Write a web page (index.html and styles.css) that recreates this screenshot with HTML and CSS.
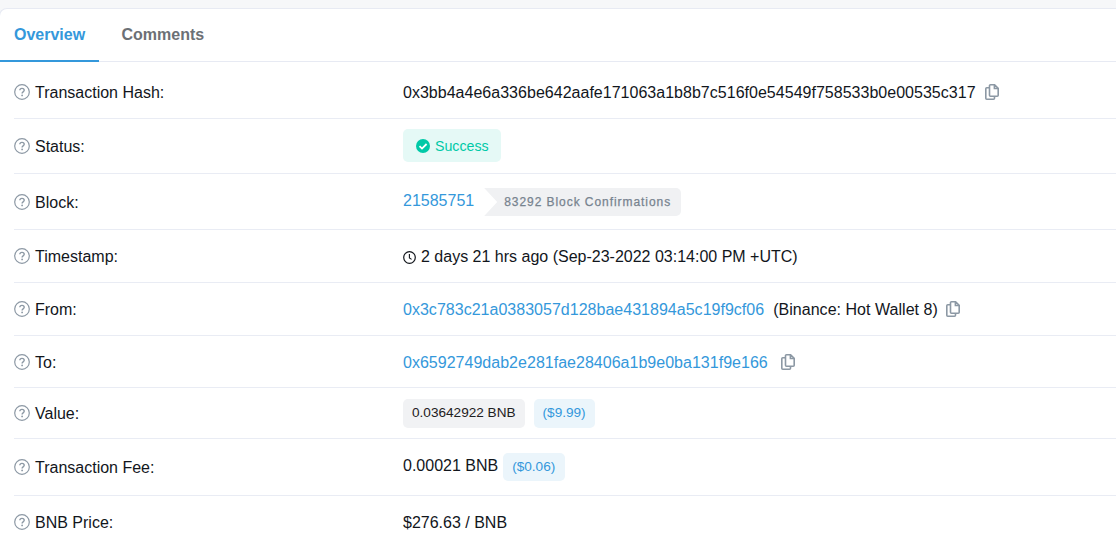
FILE: index.html
```html
<!DOCTYPE html>
<html lang="en">
<head>
    <meta charset="UTF-8">
    <title>Transaction Details</title>
    <link rel="stylesheet" href="styles.css">
</head>
<body>
    <svg class="sprite" width="0" height="0">
        <symbol id="help" viewBox="0 0 16 16">
            <circle cx="8" cy="8" r="7.3" fill="none" stroke="currentColor" stroke-width="1.2"/>
            <path d="M5.8 6.3C5.9 5.1 6.8 4.4 8 4.4c1.3 0 2.2.8 2.2 1.9 0 1.5-2.1 1.6-2.1 3.1" fill="none" stroke="currentColor" stroke-width="1.4"/>
            <circle cx="8.1" cy="11.4" r=".9" fill="currentColor"/>
        </symbol>
        <symbol id="copy" viewBox="0 0 14 16">
            <path d="M9.6.8H5.5a1 1 0 0 0-1 1v9.4a1 1 0 0 0 1 1h6.7a1 1 0 0 0 1-1V4.3zM9.4.8v3.7h3.8M4.5 3.8H1.8a1 1 0 0 0-1 1v9.4a1 1 0 0 0 1 1h6.7a1 1 0 0 0 1-1v-2" fill="none" stroke="currentColor" stroke-width="1.6"/>
        </symbol>
        <symbol id="clock" viewBox="0 0 13 13">
            <circle cx="6.5" cy="6.5" r="5.8" fill="none" stroke="currentColor" stroke-width="1.2"/>
            <path d="M6.4 3v3.9l2.2 1.5" fill="none" stroke="currentColor" stroke-width="1.1"/>
        </symbol>
        <symbol id="check" viewBox="0 0 14 14">
            <circle cx="7" cy="7" r="7" fill="currentColor"/>
            <path d="M3.5 7.2l2.5 2.4 4.6-4.6" fill="none" stroke="#fff" stroke-width="1.8"/>
        </symbol>
    </svg>
    <div class="card">
        <ul class="tabs">
            <li class="active">Overview</li>
            <li>Comments</li>
        </ul>
        <dl class="details">
            <div class="row hash">
                <dt><svg class="help"><use href="#help"/></svg>Transaction Hash:</dt>
                <dd><span>0x3bb4a4e6a336be642aafe171063a1b8b7c516f0e54549f758533b0e00535c317</span><svg class="copy"><use href="#copy"/></svg></dd>
            </div>
            <div class="row status">
                <dt><svg class="help"><use href="#help"/></svg>Status:</dt>
                <dd><span class="success"><svg class="check"><use href="#check"/></svg>Success</span></dd>
            </div>
            <div class="row block">
                <dt><svg class="help"><use href="#help"/></svg>Block:</dt>
                <dd><a>21585751</a><span class="confirm">83292 Block Confirmations</span></dd>
            </div>
            <div class="row time">
                <dt><svg class="help"><use href="#help"/></svg>Timestamp:</dt>
                <dd><svg class="clock"><use href="#clock"/></svg><span>2 days 21 hrs ago (Sep-23-2022 03:14:00 PM +UTC)</span></dd>
            </div>
            <div class="row from">
                <dt><svg class="help"><use href="#help"/></svg>From:</dt>
                <dd><a>0x3c783c21a0383057d128bae431894a5c19f9cf06</a><span class="name">(Binance: Hot Wallet 8)</span><svg class="copy"><use href="#copy"/></svg></dd>
            </div>
            <div class="row to">
                <dt><svg class="help"><use href="#help"/></svg>To:</dt>
                <dd><a>0x6592749dab2e281fae28406a1b9e0ba131f9e166</a><svg class="copy"><use href="#copy"/></svg></dd>
            </div>
            <div class="row value">
                <dt><svg class="help"><use href="#help"/></svg>Value:</dt>
                <dd><span class="pill grey">0.03642922 BNB</span><span class="pill">($9.99)</span></dd>
            </div>
            <div class="row fee">
                <dt><svg class="help"><use href="#help"/></svg>Transaction Fee:</dt>
                <dd><span>0.00021 BNB</span><span class="pill">($0.06)</span></dd>
            </div>
            <div class="row price">
                <dt><svg class="help"><use href="#help"/></svg>BNB Price:</dt>
                <dd><span>$276.63 / BNB</span></dd>
            </div>
        </dl>
    </div>
</body>
</html>
```

FILE: styles.css
```css
*{margin:0;padding:0;box-sizing:border-box;}
body{
    padding-top: 8px;
    height: 542px;
    overflow: hidden;
    background-color: #f6f7f9;
    font-family: "Liberation Sans", Arial, sans-serif;
    font-size: 16px;
    line-height: 26px;
    color: #12161c;
}
.sprite{
    display: block;
}
.card{
    height: 560px;
    margin-left: -1px;
    border: 1px solid #e7eaf3;
    border-right: 0;
    border-radius: 8px 0 0 0;
    background-color: #fff;
}
.tabs{
    display: flex;
    height: 53px;
    list-style: none;
    border-bottom: 1px solid #e7eaf3;
    font-weight: bold;
    color: #6c7075;
}
.tabs li{
    height: 53px;
    padding: 13px 14px 0;
    margin-right: 8.5px;
}
.tabs .active{
    width: 99px;
    color: #3498db;
    border-bottom: 2px solid #3498db;
}
.details{
    padding-left: 14px;
}
.row{
    display: flex;
    border-bottom: 1px solid #e9ecf4;
}
.row dt{
    display: flex;
    width: 389px;
    flex: none;
}
.row dd{
    display: flex;
    align-items: flex-start;
    white-space: nowrap;
}
svg{
    flex: none;
}
.help{
    width: 16px;
    height: 16px;
    margin: 4px 5px 0 0;
    color: #8c98a4;
}
.copy{
    width: 14px;
    height: 16px;
    margin: 4px 0 0 9px;
    color: #8c98a4;
}
a{
    color: #3498db;
}
.hash span,.from a,.to a{
    letter-spacing: .02px;
}
.hash{height: 57px;padding-top: 18px;}
.status{height: 55px;padding-top: 10px;}
.status dt{padding-top: 5px;}
.block{height: 56px;padding-top: 14px;}
.block dt{padding-top: 2px;}
.time{height: 53px;padding-top: 14px;}
.from{height: 53px;padding-top: 14px;}
.to{height: 52px;padding-top: 14px;}
.value{height: 51px;padding-top: 11px;}
.value dt{padding-top: 2px;}
.fee{height: 57px;padding-top: 14px;}
.fee dt{padding-top: 2px;}
.price{height: 60px;padding-top: 14px;border-bottom: 0;}
.success{
    display: flex;
    width: 98px;
    height: 33px;
    padding-left: 13px;
    border-radius: 5px;
    background-color: #e5f9f6;
    color: #00c9a7;
    font-size: 14.2px;
    line-height: 35px;
}
.check{
    width: 14px;
    height: 14px;
    margin: 10px 5px 0 0;
}
.confirm{
    width: 197px;
    height: 28px;
    margin-left: 10px;
    padding-left: 20px;
    border-radius: 0 5px 5px 0;
    background-color: #f0f1f3;
    clip-path: polygon(0 0, 100% 0, 100% 100%, 0 100%, 13px 50%);
    color: #77838f;
    font-size: 12px;
    letter-spacing: .94px;
    line-height: 28px;
    -webkit-text-stroke: .25px #77838f;
}
.clock{
    width: 13px;
    height: 13px;
    margin: 7px 5px 0 0;
}
.name{
    margin-left: 9px;
    letter-spacing: .03px;
}
.from .copy{
    margin-left: 8px;
}
.to .copy{
    margin-left: 13px;
}
.pill{
    height: 28px;
    padding: 0 9px;
    border-radius: 5px;
    background-color: #ebf5fb;
    color: #3498db;
    font-size: 13.6px;
    line-height: 27px;
}
.value .pill{
    height: 29px;
    margin-right: 9px;
}
.value .grey{
    background-color: #f1f2f4;
    color: #1e2022;
}
.fee .pill{
    margin-left: 5px;
    padding-right: 10px;
}
```
